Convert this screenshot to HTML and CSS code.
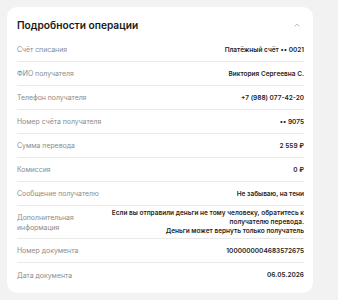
FILE: index.html
```html
<!DOCTYPE html>
<html lang="ru">
<head>
    <meta charset="UTF-8">
    <meta name="viewport" content="width=device-width, initial-scale=1.0">
    <title>Подробности операции</title>
    <link rel="stylesheet" href="styles.css">
</head>
<body>
    <div class="card">
        <div class="card-head">
            <h2>Подробности операции</h2>
            <svg class="chevron" width="6" height="4" viewBox="0 0 6 4">
                <path d="M0.5 3.5 L3 1 L5.5 3.5" fill="none" stroke="#b5b5b5" stroke-width="0.9"/>
            </svg>
        </div>
        <div class="rows">
            <div class="row">
                <span class="label">Счёт списания</span>
                <span class="value">Платёжный счёт •• 0021</span>
            </div>
            <div class="row">
                <span class="label">ФИО получателя</span>
                <span class="value">Виктория Сергеевна С.</span>
            </div>
            <div class="row">
                <span class="label">Телефон получателя</span>
                <span class="value">+7 (988) 077-42-20</span>
            </div>
            <div class="row">
                <span class="label">Номер счёта получателя</span>
                <span class="value">•• 9075</span>
            </div>
            <div class="row">
                <span class="label">Сумма перевода</span>
                <span class="value">2 559 ₽</span>
            </div>
            <div class="row">
                <span class="label">Комиссия</span>
                <span class="value">0 ₽</span>
            </div>
            <div class="row">
                <span class="label">Сообщение получателю</span>
                <span class="value">Не забываю, на тени</span>
            </div>
            <div class="row">
                <span class="label">Дополнительная информация</span>
                <span class="value">Если вы отправили деньги не тому человеку, обратитесь к получателю перевода.<br>Деньги может вернуть только получатель</span>
            </div>
            <div class="row">
                <span class="label">Номер документа</span>
                <span class="value">1000000004683572675</span>
            </div>
            <div class="row">
                <span class="label">Дата документа</span>
                <span class="value">06.05.2026</span>
            </div>
        </div>
    </div>
</body>
</html>
```

FILE: styles.css
```css
body {
    margin: 0;
    padding: 7px;
    background: #f2f2f2;
    font-family: Inter, "Noto Sans", sans-serif;
}
.card {
    width: 306px;
    box-sizing: border-box;
    background: #fff;
    border-radius: 10px;
    padding: 10px 9px 6px 10px;
}
.card-head {
    display: flex;
    justify-content: space-between;
    align-items: center;
    padding-right: 4px;
    margin-bottom: 5px;
}
.card-head h2 {
    margin: 0;
    font-size: 10.2px;
    line-height: 16px;
    font-weight: 600;
    color: #1a1a1a;
}
.chevron {
    display: block;
}
.row {
    display: flex;
    justify-content: space-between;
    align-items: center;
    gap: 4px;
    min-height: 24px;
    box-sizing: border-box;
    padding: 3px 0 2px;
    border-bottom: 1px solid #e9e9e9;
}
.row:last-child {
    border-bottom: none;
}
.label {
    flex: 0 0 86px;
    font-size: 6.9px;
    line-height: 10px;
    color: #8c8c8c;
}
.value {
    flex: 1;
    text-align: right;
    font-size: 6.5px;
    line-height: 9px;
    font-weight: 600;
    color: #1f1f1f;
}
```
